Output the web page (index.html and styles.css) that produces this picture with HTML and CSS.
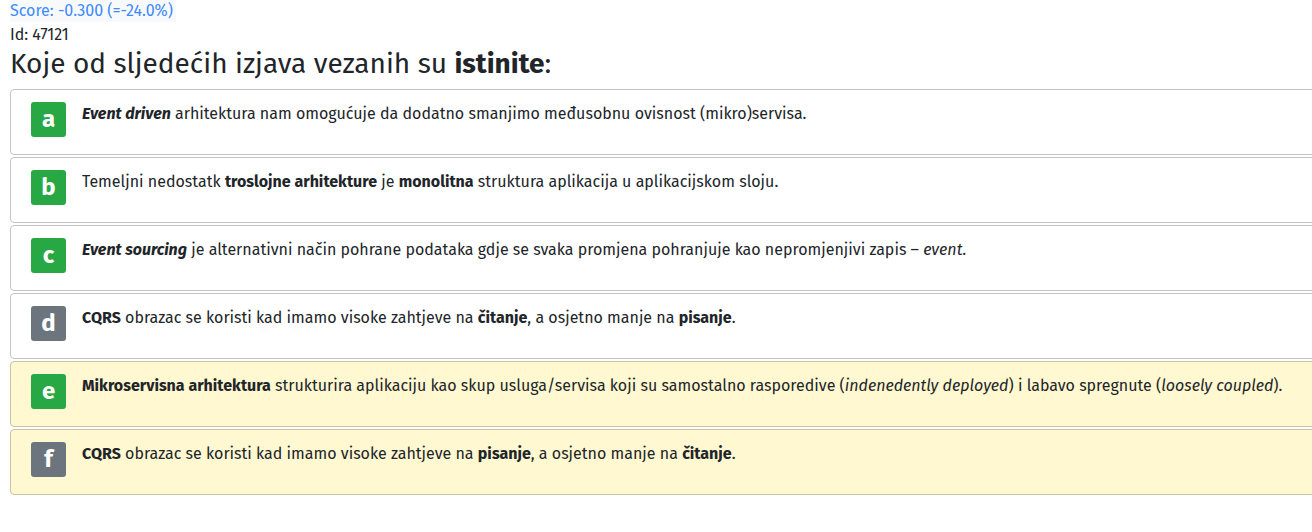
FILE: index.html
```html
<!DOCTYPE html>
<html lang="hr">
<head>
<meta charset="utf-8">
<title>Pitanje 47121</title>
<link rel="stylesheet" href="styles.css">
</head>
<body>
<div class="page">
  <div class="score">Score: -0.300 (=-24.0%)</div>
  <div class="qid">Id: 47121</div>
  <h1 class="question">Koje od sljedećih izjava vezanih su <b>istinite</b>:</h1>
  <div class="answers">
    <div class="answer">
      <span class="badge correct">a</span>
      <div class="text"><b><i>Event driven</i></b> arhitektura nam omogućuje da dodatno smanjimo međusobnu ovisnost (mikro)servisa.</div>
    </div>
    <div class="answer">
      <span class="badge correct">b</span>
      <div class="text">Temeljni nedostatk <b>troslojne arhitekture</b> je <b>monolitna</b> struktura aplikacija u aplikacijskom sloju.</div>
    </div>
    <div class="answer">
      <span class="badge correct">c</span>
      <div class="text"><b><i>Event sourcing</i></b> je alternativni način pohrane podataka gdje se svaka promjena pohranjuje kao nepromjenjivi zapis – <i>event</i>.</div>
    </div>
    <div class="answer">
      <span class="badge wrong">d</span>
      <div class="text"><b>CQRS</b> obrazac se koristi kad imamo visoke zahtjeve na <b>čitanje</b>, a osjetno manje na <b>pisanje</b>.</div>
    </div>
    <div class="answer missed">
      <span class="badge correct">e</span>
      <div class="text"><b>Mikroservisna arhitektura</b> strukturira aplikaciju kao skup usluga/servisa koji su samostalno rasporedive (<i>indenedently deployed</i>) i labavo spregnute (<i>loosely coupled</i>).</div>
    </div>
    <div class="answer missed">
      <span class="badge wrong">f</span>
      <div class="text"><b>CQRS</b> obrazac se koristi kad imamo visoke zahtjeve na <b>pisanje</b>, a osjetno manje na <b>čitanje</b>.</div>
    </div>
  </div>
</div>
</body>
</html>
```
FILE: styles.css
```css
html, body {
  margin: 0;
  padding: 0;
  background: #fff;
  overflow: hidden;
}
body {
  font-family: "Fira Sans", "Open Sans", "Noto Sans", sans-serif;
  color: #212529;
}
.page {
  padding: 0 0 0 10px;
  width: 1340px;
}
.score {
  display: inline-block;
  background: #f8f9fa;
  color: #3d8bfd;
  font-size: 16px;
  line-height: 22px;
  padding-right: 3px;
  vertical-align: top;
}
.qid {
  font-size: 16px;
  line-height: 22px;
  margin-top: 2px;
}
.question {
  font-size: 28px;
  font-weight: 400;
  line-height: 34px;
  margin: 1px 0 8px 0;
}
.question b {
  font-weight: 700;
}
.answers {
  display: flex;
  flex-direction: column;
  gap: 2px;
}
.answer {
  display: flex;
  align-items: flex-start;
  gap: 16px;
  border: 1px solid #c4c4c4;
  border-radius: 4px;
  padding: 12px 20px 17px 20px;
  background: #fff;
}
.answer.missed {
  background: #fff8d1;
  border-color: #c9c3a4;
}
.badge {
  flex: none;
  width: 35px;
  height: 35px;
  border-radius: 3px;
  color: #fff;
  font-weight: 700;
  font-size: 24px;
  line-height: 35px;
  text-align: center;
}
.badge.correct { background: #28a745; }
.badge.wrong { background: #6c757d; }
.text {
  font-size: 16px;
  line-height: 24px;
}
```
